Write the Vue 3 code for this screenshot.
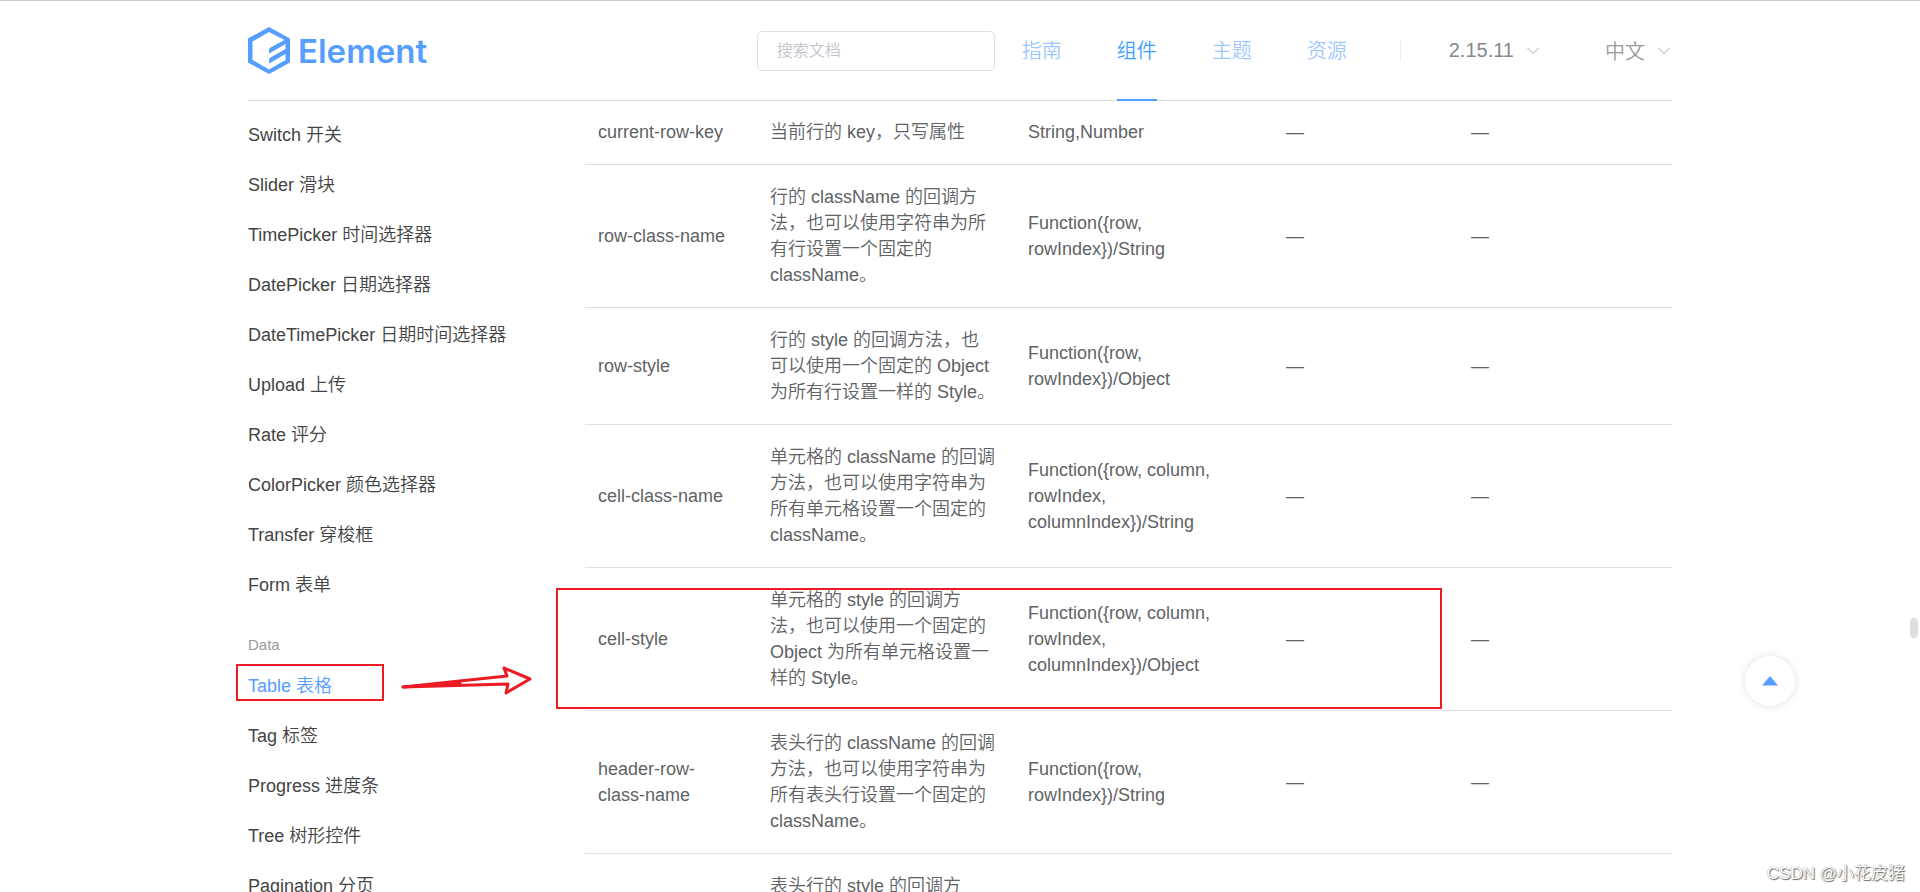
<script setup>
import { ref } from 'vue'

const keyword = ref('')
const navLinks = [
  { text: '指南' },
  { text: '组件', active: true },
  { text: '主题' },
  { text: '资源' },
]
const formItems = [
  'Switch 开关',
  'Slider 滑块',
  'TimePicker 时间选择器',
  'DatePicker 日期选择器',
  'DateTimePicker 日期时间选择器',
  'Upload 上传',
  'Rate 评分',
  'ColorPicker 颜色选择器',
  'Transfer 穿梭框',
  'Form 表单',
]
const dataItems = ['Table 表格', 'Tag 标签', 'Progress 进度条', 'Tree 树形控件', 'Pagination 分页']
const rows = [
  { name: 'current-row-key', desc: '当前行的 key，只写属性', type: 'String,Number' },
  {
    name: 'row-class-name',
    desc: '行的 className 的回调方\n法，也可以使用字符串为所\n有行设置一个固定的\nclassName。',
    type: 'Function({row,\nrowIndex})/String',
  },
  {
    name: 'row-style',
    desc: '行的 style 的回调方法，也\n可以使用一个固定的 Object\n为所有行设置一样的 Style。',
    type: 'Function({row,\nrowIndex})/Object',
  },
  {
    name: 'cell-class-name',
    desc: '单元格的 className 的回调\n方法，也可以使用字符串为\n所有单元格设置一个固定的\nclassName。',
    type: 'Function({row, column,\nrowIndex,\ncolumnIndex})/String',
  },
  {
    name: 'cell-style',
    desc: '单元格的 style 的回调方\n法，也可以使用一个固定的\nObject 为所有单元格设置一\n样的 Style。',
    type: 'Function({row, column,\nrowIndex,\ncolumnIndex})/Object',
    marked: true,
  },
  {
    name: 'header-row-\nclass-name',
    desc: '表头行的 className 的回调\n方法，也可以使用字符串为\n所有表头行设置一个固定的\nclassName。',
    type: 'Function({row,\nrowIndex})/String',
  },
  {
    name: 'header-row-style',
    desc: '表头行的 style 的回调方\n法，也可以使用一个固定的\nObject 为所有表头行设置一\n样的 Style。',
    type: 'Function({row,\nrowIndex})/Object',
  },
]
</script>

<template>
  <div class="page">
    <header class="header">
      <div class="container bar">
        <a class="logo" href="#" aria-label="Element">
          <svg width="42" height="48" viewBox="0 0 42 48" aria-hidden="true">
            <path
              fill="#559eff"
              fill-rule="evenodd"
              d="M21 0 42 11.500V35.500L21 47 0 35.500V11.500ZM21 5 4.500 14.500V33L21 42.500 37.500 33V27L21 36.500V33Q21 31.500 22.500 30.500L37.500 22V17L21 26.500V23Q21 21.500 22.500 20.500L36.500 13Z"
            />
          </svg>
          <span>Element</span>
        </a>
        <input v-model="keyword" class="search" type="text" placeholder="搜索文档" aria-label="搜索文档" />
        <nav class="nav">
          <a v-for="n in navLinks" :key="n.text" href="#" :class="{ active: n.active }">{{ n.text }}</a>
        </nav>
        <span class="divider"></span>
        <button class="drop version" type="button">
          2.15.11
          <svg width="12" height="8" viewBox="0 0 12 8" aria-hidden="true"><path d="M.5 1 6 6.500 11.500 1" /></svg>
        </button>
        <button class="drop" type="button">
          中文
          <svg width="12" height="8" viewBox="0 0 12 8" aria-hidden="true"><path d="M.5 1 6 6.500 11.500 1" /></svg>
        </button>
      </div>
    </header>

    <div class="container body">
      <aside class="side">
        <a v-for="t in formItems" :key="t" href="#">{{ t }}</a>
        <h4>Data</h4>
        <a v-for="(t, i) in dataItems" :key="t" href="#" :class="{ current: i === 0 }">
          {{ t }}
          <template v-if="i === 0">
            <span class="side-mark"></span>
            <svg class="arrow" width="134" height="32" viewBox="0 0 134 32" aria-hidden="true">
              <path d="M3 22 107 11 104 3 130 14 106 28 108 19Z" />
              <path d="M3 22 60 18" />
            </svg>
          </template>
        </a>
      </aside>

      <main class="main">
        <table>
          <colgroup>
            <col class="c-name" />
            <col class="c-text" />
            <col class="c-text" />
            <col class="c-opt" />
            <col />
          </colgroup>
          <tbody>
            <tr v-for="r in rows" :key="r.name">
              <td>
                {{ r.name }}
                <span v-if="r.marked" class="row-mark"></span>
              </td>
              <td>{{ r.desc }}</td>
              <td>{{ r.type }}</td>
              <td>—</td>
              <td>—</td>
            </tr>
          </tbody>
        </table>
      </main>
    </div>

    <button class="totop" type="button" aria-label="回到顶部">
      <svg width="16" height="10" viewBox="0 0 16 10" aria-hidden="true"><path fill="#559eff" d="M8 0 16 9.500H0Z" /></svg>
    </button>
    <span class="thumb"></span>
    <span class="credit">CSDN @小花皮猪</span>
  </div>
</template>

<style>
body {
  margin: 0;
  background: #fff;
}
</style>

<style scoped>
.page {
  position: relative;
  display: flex;
  flex-direction: column;
  box-sizing: border-box;
  height: 100vh;
  overflow: hidden;
  border-top: 1px solid #ccc;
  font-family: 'Liberation Sans', 'Noto Sans CJK SC', sans-serif;
  font-size: 18px;
  font-weight: 350;
  color: #606266;
}
a {
  text-decoration: none;
}
.container {
  width: 100%;
  max-width: 1424px;
  margin: 0 auto;
}
.header {
  flex: none;
}
.bar {
  display: flex;
  align-items: center;
  height: 99px;
  border-bottom: 1px solid #dcdfe6;
}
.logo {
  display: flex;
  align-items: center;
  gap: 8px;
  margin-right: auto;
  color: #559eff;
  font-family: Inter, sans-serif;
  font-size: 33px;
  font-weight: 600;
}
.search {
  box-sizing: border-box;
  width: 238px;
  height: 40px;
  margin-right: 27px;
  padding: 0 19px;
  border: 1px solid #dcdfe6;
  border-radius: 5px;
  font: inherit;
  font-size: 16px;
}
.search::placeholder {
  color: #c0c4cc;
}
.nav {
  display: flex;
  align-self: stretch;
  gap: 55px;
  margin-bottom: -1px;
}
.nav a {
  display: flex;
  align-items: center;
  padding-bottom: 2px;
  font-size: 20px;
  color: #a0c8ff;
  box-sizing: border-box;
  border-bottom: 2px solid transparent;
}
.nav a.active {
  color: #409eff;
  border-bottom-color: #559eff;
}
.divider {
  width: 1px;
  height: 20px;
  margin: 0 48px 0 53px;
  background: #ebebeb;
}
.drop {
  display: flex;
  align-items: center;
  gap: 13px;
  padding: 0 2px 0 0;
  border: 0;
  background: none;
  font: inherit;
  font-size: 20px;
  color: #999;
}
.drop.version {
  margin-right: 64px;
  color: #888;
}
.drop path {
  fill: none;
  stroke: #aaa;
}
.body {
  display: flex;
  flex: 1;
  min-height: 0;
}
.side {
  flex: none;
  width: 337px;
  padding-top: 9px;
}
.side a {
  position: relative;
  display: block;
  width: 270px;
  line-height: 50px;
  color: #444;
}
.side a.current {
  color: #559eff;
}
.side h4 {
  margin: 0;
  padding: 20px 0 1px;
  font-size: 15px;
  font-weight: 350;
  line-height: 30px;
  color: #999;
}
.side-mark {
  position: absolute;
  top: 3px;
  left: -12px;
  box-sizing: border-box;
  width: 148px;
  height: 37px;
  border: 2px solid #ed1c24;
}
.arrow {
  position: absolute;
  top: 4px;
  left: 152px;
}
.arrow path {
  fill: none;
  stroke: #ed1c24;
  stroke-width: 3;
  stroke-linecap: round;
  stroke-linejoin: round;
}
.main {
  flex: 1;
  min-width: 0;
}
table {
  width: 100%;
  border-collapse: separate;
  border-spacing: 0;
  table-layout: fixed;
}
.c-name {
  width: 166px;
}
.c-text {
  width: 258px;
}
.c-opt {
  width: 185px;
}
td {
  padding: 19px 0 19px 19px;
  border-bottom: 1px solid #dcdfe6;
  line-height: 26px;
  white-space: pre-line;
}
td:first-child {
  position: relative;
  padding-left: 13px;
}
tr:first-child td {
  padding-top: 18px;
}
.row-mark {
  position: absolute;
  top: 20px;
  left: -29px;
  box-sizing: border-box;
  width: 886px;
  height: 121px;
  border: 2px solid #ed1c24;
}
.totop {
  position: absolute;
  top: 655px;
  right: 125px;
  display: flex;
  align-items: center;
  justify-content: center;
  width: 50px;
  height: 50px;
  padding: 0;
  border: 0;
  border-radius: 50%;
  background: #fff;
  box-shadow: 0 0 8px rgba(0, 0, 0, 0.12);
}
.thumb {
  position: absolute;
  top: 617px;
  right: 2px;
  width: 8px;
  height: 20px;
  border-radius: 4px;
  background: #dddee0;
}
.credit {
  position: absolute;
  right: 15px;
  bottom: 5px;
  font-size: 17px;
  line-height: 26px;
  color: #fff;
  text-shadow: 1px 1px 1px #666, 0 0 1px #777;
}
</style>
